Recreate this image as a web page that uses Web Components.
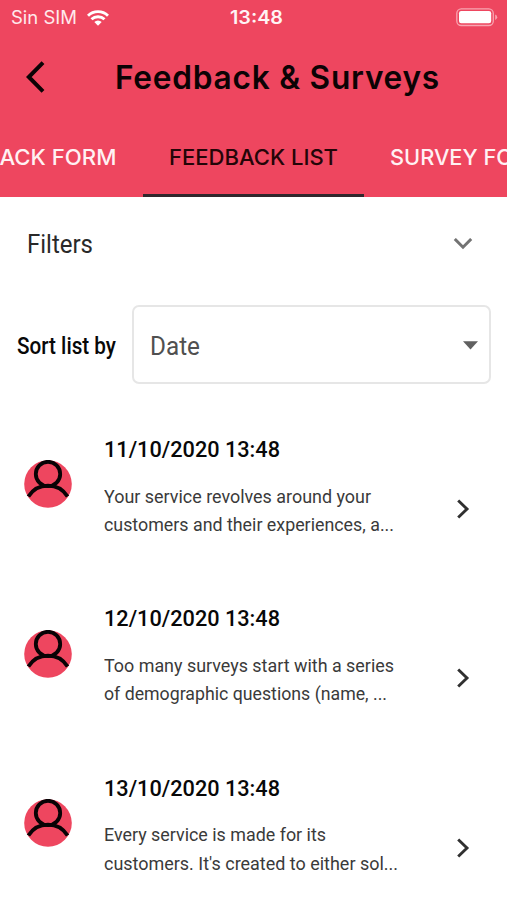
<!DOCTYPE html>
<html lang="en"><head><meta charset="utf-8"><title>Feedback &amp; Surveys</title>
<style>html,body{margin:0;background:#fff}body{width:507px;height:900px;overflow:hidden;font-family:Roboto,"Liberation Sans",sans-serif}</style></head>
<body>
<feedback-app></feedback-app>
<script>
const define=(name,html,setup)=>customElements.define(name,class extends HTMLElement{
  connectedCallback(){
    if(this.shadowRoot)return;
    this.attachShadow({mode:'open'}).innerHTML=html;
    if(setup)setup(this,this.shadowRoot);
  }
});

// A single line of text set to an exact measure.
define('fit-text',`<style>
:host{display:block;white-space:nowrap;flex:none}
span{display:inline-block;transform-origin:0 50%;vertical-align:top}
</style><span><slot></slot></span>`,(el,root)=>{
  const w=+el.getAttribute('w'),s=root.querySelector('span');
  s.style.transform='scaleX('+w/s.getBoundingClientRect().width+')';
  el.style.width=w+'px';
});

define('status-bar',`<style>
:host{display:grid;grid-template-columns:1fr auto 1fr;height:34px;align-items:center;padding:0 9px 0 13px;box-sizing:border-box;color:#ffe9ec;font:400 18px/34px Inter,sans-serif}
.l{display:flex;align-items:center;gap:10px;margin-left:-2px}
.time{font-weight:600;color:#fff4f5;padding:1px 0 0 1px}
svg{display:block}.bat{justify-self:end}
</style>
<div class="l"><fit-text w="66">Sin SIM</fit-text>
<svg width="22" height="16" viewBox="0 0 22 16" fill="none" stroke="#fff" stroke-width="2.9"><path d="M1 5.7a14.4 14.4 0 0 1 20 0M4.5 9.3a9.4 9.4 0 0 1 13 0"/><path d="M7.3 12a5.3 5.3 0 0 1 7.4 0L11 15.7z" fill="#fff" stroke="none"/></svg></div>
<fit-text class="time" w="53">13:48</fit-text>
<svg class="bat" width="42" height="19" viewBox="0 0 42 19"><rect x=".8" y=".9" width="36.5" height="16.6" rx="4.5" fill="none" stroke="#f8a5b1" stroke-width="1.3"/><rect x="3" y="3" width="32.2" height="12.3" rx="2.2" fill="#fff"/><path d="M39.2 6.5q2 .9 2 2.7t-2 2.7z" fill="#f8a5b1"/></svg>`);

define('title-bar',`<style>
:host{display:flex;height:86px;align-items:center;padding-left:26px;color:#0c0305;font:600 32.5px/86px Inter,sans-serif}
svg{width:19px;margin-right:70px}
fit-text{letter-spacing:.8px;padding-top:2px}
</style><svg width="19" height="32" viewBox="0 0 19 32" fill="none" stroke="#0c0305" stroke-width="4"><path d="M17 1.7 2.8 16 17 30.3"/></svg><fit-text w="325">Feedback &amp; Surveys</fit-text>`);

define('tab-item',`<style>
:host{display:flex;box-sizing:border-box;height:77px;padding:0 26px;border-bottom:3px solid transparent;color:#fff1f3;font:500 22px/74px Inter,sans-serif;flex:none}
:host([selected]){color:#240508;border-color:#30272c}
</style><slot></slot>`);

define('tab-bar',`<style>
:host{display:flex;justify-content:flex-start;width:507px;overflow:hidden}
tab-item:first-of-type{margin-left:-97px}
</style>
<tab-item><fit-text w="187.5">FEEDBACK FORM</fit-text></tab-item><tab-item selected><fit-text w="169">FEEDBACK LIST</fit-text></tab-item><tab-item><fit-text w="157">SURVEY FORM</fit-text></tab-item>`);

define('filter-row',`<style>
:host{display:flex;height:94px;box-sizing:border-box;align-items:center;justify-content:space-between;padding:0 34px 0 27px;color:#292929;font-size:25px;line-height:94px}
fit-text{padding-top:2px}
</style><fit-text w="66">Filters</fit-text><svg width="20" height="13" viewBox="0 0 20 13" fill="none" stroke="#737373" stroke-width="3"><path d="m1.8 1 8.2 8.2L18.2 1"/></svg>`);

define('sort-row',`<style>
:host{display:flex;align-items:center;gap:16px;padding:14px 16px 0 17px;color:#080808;font-size:23px;font-weight:500}
.lbl{padding-top:3px}
.box{flex:1;height:79px;box-sizing:border-box;border:2px solid #e6e6e6;border-radius:7px;display:flex;align-items:center;justify-content:space-between;padding:0 11px 0 16px;color:#505050;font-size:25px;font-weight:400;line-height:75px}
.box fit-text{padding-top:3px}
.box svg{margin-top:2px}
</style><fit-text class="lbl" w="99">Sort list by</fit-text><div class="box"><fit-text w="50">Date</fit-text><svg width="15" height="9" viewBox="0 0 15 9"><path d="M0 .3h15L7.5 8.5z" fill="#606060"/></svg></div>`);

define('user-avatar',`<style>:host{display:block;width:48px;height:48px}svg{display:block}</style>
<svg width="48" height="48" viewBox="0 0 48 48"><circle cx="24" cy="24" r="23.8" fill="#ee465f"/><g fill="none" stroke="#080305" stroke-width="3.8"><circle cx="24" cy="14" r="12.2"/><path d="M4.4 36.6A23 23 0 0 1 43.6 36.6"/></g></svg>`);

define('feedback-item',`<style>
:host{display:grid;grid-template-columns:48px 1fr 14px;column-gap:32px;height:169.3px;box-sizing:border-box;padding:0 37px 0 24px}
user-avatar{margin-top:25.3px}
h2{margin:0 0 17.6px;font:500 22px/30px Roboto,sans-serif;color:#080808}
.d{color:#3a3a3a;font-size:18.5px;line-height:28.5px}
svg{margin-top:64px}
</style><user-avatar></user-avatar><div><h2><slot name="date"></slot></h2><div class="d"><slot></slot></div></div><svg width="14" height="20" viewBox="0 0 14 20" fill="none" stroke="#303030" stroke-width="2.9"><path d="m2.2 1.5 8.8 8.5-8.8 8.5"/></svg>`);

define('feedback-app',`<style>:host{display:block;width:507px;height:900px;overflow:hidden}
header{background:#ee465f}
main{margin-top:51px}
</style>
<header><status-bar></status-bar><title-bar></title-bar><tab-bar></tab-bar></header>
<filter-row></filter-row><sort-row></sort-row>
<main>
<feedback-item><fit-text slot="date" w="176">11/10/2020 13:48</fit-text><fit-text w="267">Your service revolves around your</fit-text><fit-text w="290">customers and their experiences, a...</fit-text></feedback-item>
<feedback-item><fit-text slot="date" w="176">12/10/2020 13:48</fit-text><fit-text w="290">Too many surveys start with a series</fit-text><fit-text w="283">of demographic questions (name, ...</fit-text></feedback-item>
<feedback-item><fit-text slot="date" w="176">13/10/2020 13:48</fit-text><fit-text w="222">Every service is made for its</fit-text><fit-text w="294">customers. It's created to either sol...</fit-text></feedback-item>
</main>`);
</script>
</body></html>
